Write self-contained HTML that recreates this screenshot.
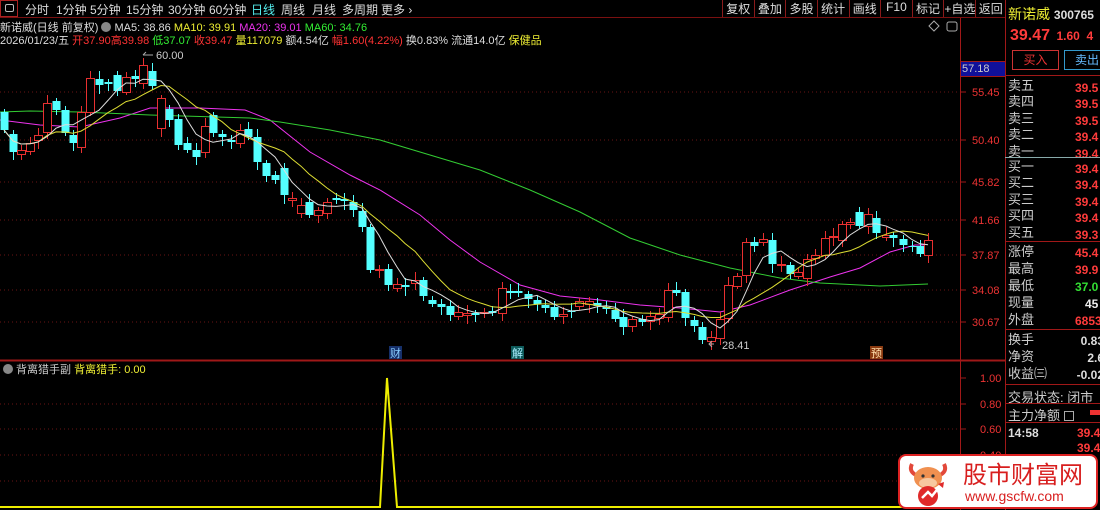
<!DOCTYPE html>
<html><head><meta charset="utf-8">
<style>
*{margin:0;padding:0;box-sizing:border-box}
body{width:1100px;height:510px;background:#000;overflow:hidden;position:relative;font-family:"Liberation Sans","Noto Sans CJK SC",sans-serif;color:#ccc}
.a{position:absolute;white-space:nowrap}
.top{font-size:12px;color:#ddd}
.rp{font-size:13px;color:#ccc}
.pr{color:#ff3b3b;font-size:12px;font-weight:bold}
</style></head><body>
<!-- top bar -->
<div class="a" style="left:0;top:0;width:18px;height:17px;border:1px solid #a22"></div>
<div class="a" style="left:5px;top:4px;width:9px;height:8px;border:1px solid #bbb;border-radius:2px"></div>
<div class="a top" style="left:25px;top:1px">分时</div>
<div class="a top" style="left:56px;top:1px">1分钟</div>
<div class="a top" style="left:90px;top:1px">5分钟</div>
<div class="a top" style="left:126px;top:1px">15分钟</div>
<div class="a top" style="left:168px;top:1px">30分钟</div>
<div class="a top" style="left:209px;top:1px">60分钟</div>
<div class="a top" style="left:251px;top:1px;color:#5ee">日线</div>
<div class="a top" style="left:281px;top:1px">周线</div>
<div class="a top" style="left:312px;top:1px">月线</div>
<div class="a top" style="left:342px;top:1px">多周期</div>
<div class="a top" style="left:381px;top:1px">更多 ›</div>
<div class="a" style="left:0;top:17px;width:1005px;height:1px;background:#7a1010"></div>
<div class="a top" style="left:722px;top:0;height:17px;width:283px;display:flex">
<span style="border-left:1px solid #8a1a1a;width:32px;text-align:center">复权</span><span style="border-left:1px solid #8a1a1a;width:32px;text-align:center">叠加</span><span style="border-left:1px solid #8a1a1a;width:32px;text-align:center">多股</span><span style="border-left:1px solid #8a1a1a;width:32px;text-align:center">统计</span><span style="border-left:1px solid #8a1a1a;width:32px;text-align:center">画线</span><span style="border-left:1px solid #8a1a1a;width:32px;text-align:center">F10</span><span style="border-left:1px solid #8a1a1a;width:32px;text-align:center">标记</span><span style="border-left:1px solid #8a1a1a;width:32px;text-align:center">+自选</span><span style="border-left:1px solid #8a1a1a;width:30px;text-align:center">返回</span>
</div>
<div class="a" style="left:0;top:19px;font-size:11px;color:#ddd">新诺威(日线 前复权) <span style="display:inline-block;width:10px;height:10px;border-radius:5px;background:#888;vertical-align:-1px"></span> MA5: 38.86 <span style="color:#ee3">MA10: 39.91</span> <span style="color:#e3e">MA20: 39.01</span> <span style="color:#3e3">MA60: 34.76</span></div>
<div class="a" style="left:0;top:32px;font-size:11px;color:#ddd">2026/01/23/五 <span style="color:#f33">开37.90</span><span style="color:#f33">高39.98</span> <span style="color:#3e3">低37.07</span> <span style="color:#f33">收39.47</span> <span style="color:#ee3">量117079</span> 额4.54亿 <span style="color:#f33">幅1.60(4.22%)</span> 换0.83% 流通14.0亿 <span style="color:#ee3">保健品</span></div>

<svg class="a" style="left:0;top:0" width="1005" height="510" id="ch">
<g stroke="#6a1414" stroke-dasharray="1,3" stroke-width="1">
<line x1="0" x2="960" y1="92" y2="92"/><line x1="0" x2="960" y1="140" y2="140"/><line x1="0" x2="960" y1="182" y2="182"/><line x1="0" x2="960" y1="220" y2="220"/><line x1="0" x2="960" y1="255" y2="255"/><line x1="0" x2="960" y1="290" y2="290"/><line x1="0" x2="960" y1="322" y2="322"/>
<line x1="0" x2="960" y1="404" y2="404"/><line x1="0" x2="960" y1="429" y2="429"/><line x1="0" x2="960" y1="455" y2="455"/><line x1="0" x2="960" y1="481" y2="481"/>
</g>
<line x1="960.5" x2="960.5" y1="18" y2="510" stroke="#a01818"/>
<line x1="0" x2="1005" y1="360.5" y2="360.5" stroke="#a01818" stroke-width="2"/>
<g stroke="#a01818"><line x1="960" x2="966" y1="92" y2="92"/><line x1="960" x2="966" y1="140" y2="140"/><line x1="960" x2="966" y1="182" y2="182"/><line x1="960" x2="966" y1="220" y2="220"/><line x1="960" x2="966" y1="255" y2="255"/><line x1="960" x2="966" y1="290" y2="290"/><line x1="960" x2="966" y1="322" y2="322"/><line x1="960" x2="966" y1="378" y2="378"/><line x1="960" x2="966" y1="404" y2="404"/><line x1="960" x2="966" y1="429" y2="429"/><line x1="960" x2="966" y1="455" y2="455"/></g>
<polyline fill="none" stroke="#e3e" stroke-width="1" points="0,120 40,125 80,127 120,118 150,108 200,108 245,110 270,120 310,152 350,175 380,190 420,215 450,240 480,262 520,285 560,296 600,300 640,305 680,308 720,312 750,305 790,290 830,277 860,268 890,252 915,245 928,245"/>
<polyline fill="none" stroke="#3c3" stroke-width="1" points="0,112 30,111 80,112 150,115 250,118 280,122 330,130 380,140 430,155 480,170 530,190 580,212 630,238 680,255 730,268 780,278 820,283 880,286 928,284"/>
<g id="cd"></g>
<polyline id="m10" fill="none" stroke="#dd3" stroke-width="1"/>
<polyline id="m5" fill="none" stroke="#ddd" stroke-width="1"/>
<polyline fill="none" stroke="#ee0" stroke-width="2" points="0,507 380,507 387,378 397,507 960,507"/>
<path d="M146 52 l-3 3 M143 55 h10" stroke="#aaa" fill="none"/>
<text x="156" y="59" fill="#ccc" font-size="11" font-family="Liberation Sans">60.00</text>
<path d="M714 344 h-5 m3 -3 l-3 3 l3 3" stroke="#aaa" fill="none"/>
<text x="722" y="349" fill="#ccc" font-size="11" font-family="Liberation Sans">28.41</text>
<g font-size="11" font-family="Liberation Sans" fill="#e33">
<text x="972" y="96">55.45</text><text x="972" y="144">50.40</text><text x="972" y="186">45.82</text><text x="972" y="224">41.66</text><text x="972" y="259">37.87</text><text x="972" y="294">34.08</text><text x="972" y="326">30.67</text>
<text x="980" y="382">1.00</text><text x="980" y="408">0.80</text><text x="980" y="433">0.60</text><text x="980" y="459">0.40</text>
</g>
<rect x="961" y="61" width="44" height="15" fill="#10109a"/>
<text x="962" y="72" fill="#ccc" font-size="11" font-family="Liberation Sans">57.18</text>
<line x1="961" x2="1005" y1="61.5" y2="61.5" stroke="#a01818"/><line x1="961" x2="1005" y1="76.5" y2="76.5" stroke="#a01818"/>
<rect x="389" y="346" width="13" height="13" fill="#16306a"/><text x="390" y="357" fill="#8cf" font-size="11" font-family="Noto Sans CJK SC">财</text>
<rect x="511" y="346" width="13" height="13" fill="#0d5a5a"/><text x="512" y="357" fill="#aef" font-size="11" font-family="Noto Sans CJK SC">解</text>
<rect x="870" y="346" width="13" height="13" fill="#8a3a10"/><text x="871" y="357" fill="#fda" font-size="11" font-family="Noto Sans CJK SC">预</text>
<path d="M929 26 l5 -5 l5 5 l-5 5 z" stroke="#aaa" fill="none"/>
<rect x="947" y="22" width="10" height="9" rx="2" stroke="#aaa" fill="none"/>
</svg>
<div class="a" style="left:3px;top:361px;font-size:11px;color:#ccc"><span style="display:inline-block;width:10px;height:10px;border-radius:5px;background:#888;vertical-align:-1px"></span> 背离猎手副 <span style="color:#ee3">背离猎手: 0.00</span></div>

<!-- right panel -->
<div class="a" style="left:1005px;top:0;width:1px;height:510px;background:#a01818"></div>
<div class="a" style="left:1008px;top:4px;font-size:14px;color:#ee3">新诺威 <span style="color:#ddd;font-size:12px;font-weight:bold">300765</span></div>
<div class="a" style="left:1010px;top:27px;font-size:16px;font-weight:bold;color:#ff3b3b">39.47 <span style="font-size:12px;margin-left:2px">1.60 &nbsp;4</span></div>
<div class="a" style="left:1012px;top:50px;width:47px;height:20px;border:1px solid #c33;color:#e33;font-size:12px;text-align:center;line-height:18px">买入</div>
<div class="a" style="left:1064px;top:50px;width:40px;height:20px;border:1px solid #39c;color:#6bf;font-size:12px;text-align:left;padding-left:10px;line-height:18px">卖出</div>
<div class="a" style="left:1005px;top:75px;width:95px;height:1px;background:#a01818"></div>
<div class="a rp" style="left:1008px;top:78px;line-height:16.4px">卖五<br>卖四<br>卖三<br>卖二<br>卖一</div>
<div class="a pr" style="left:1075px;top:80px;line-height:16.4px">39.5<br>39.5<br>39.5<br>39.4<br>39.4</div>
<div class="a" style="left:1005px;top:157px;width:95px;height:1px;background:#8aa"></div>
<div class="a rp" style="left:1008px;top:159px;line-height:16.4px">买一<br>买二<br>买三<br>买四<br>买五</div>
<div class="a pr" style="left:1075px;top:161px;line-height:16.4px">39.4<br>39.4<br>39.4<br>39.4<br>39.3</div>
<div class="a" style="left:1005px;top:241px;width:95px;height:1px;background:#a01818"></div>
<div class="a rp" style="left:1008px;top:243px;line-height:17px">涨停<br>最高<br>最低<br>现量<br>外盘</div>
<div class="a pr" style="left:1075px;top:245px;line-height:17px">45.4<br>39.9<br><span style="color:#3d3">37.0</span><br><span style="color:#eee;padding-left:10px">45</span><br>6853</div>
<div class="a" style="left:1005px;top:329px;width:95px;height:1px;background:#a01818"></div>
<div class="a rp" style="left:1008px;top:331px;line-height:17px">换手<br>净资<br>收益㈢</div>
<div class="a" style="left:1070px;top:333px;line-height:17px;font-size:12px;font-weight:bold;color:#ddd;text-align:right;width:34px">0.83<br>2.6<br>-0.02</div>
<div class="a" style="left:1005px;top:384px;width:95px;height:1px;background:#a01818"></div>
<div class="a rp" style="left:1008px;top:387px">交易状态: 闭市</div>
<div class="a" style="left:1005px;top:403px;width:95px;height:1px;background:#a01818"></div>
<div class="a rp" style="left:1008px;top:405px">主力净额 <span style="display:inline-block;width:10px;height:10px;border:1px solid #aaa;vertical-align:-1px"></span></div>
<div class="a" style="left:1090px;top:410px;width:10px;height:5px;background:#e33"></div>
<div class="a" style="left:1005px;top:422px;width:95px;height:1px;background:#a01818"></div>
<div class="a" style="left:1008px;top:426px;font-size:12px;font-weight:bold;color:#ddd">14:58</div>
<div class="a pr" style="left:1077px;top:426px;line-height:15px">39.4<br>39.4</div>

<!-- watermark -->
<div class="a" style="left:898px;top:454px;width:200px;height:55px;background:#fff;border:2px solid #d22;border-radius:8px"></div>
<svg class="a" style="left:904px;top:458px" width="50" height="50">
<path d="M8 6 q-4 8 6 12 M40 6 q4 8 -6 12" stroke="#e2483a" stroke-width="4" fill="none"/>
<ellipse cx="24" cy="20" rx="14" ry="11" fill="#f09050"/>
<ellipse cx="24" cy="25" rx="9" ry="5" fill="#f7c8a0"/>
<circle cx="19" cy="18" r="1.6" fill="#333"/><circle cx="29" cy="18" r="1.6" fill="#333"/>
<circle cx="24" cy="38" r="10" fill="#e02a2a"/>
<path d="M18 40 l6 -6 l4 4 l8 -10" stroke="#fff" stroke-width="2.5" fill="none"/>
<path d="M34 26 l6 -2 l-1 6 z" fill="#e02a2a"/>
</svg>
<div class="a" style="left:963px;top:459px;font-size:24px;color:#d81e1e;font-family:'Noto Sans CJK SC',sans-serif;line-height:28px">股市财富网</div>
<div class="a" style="left:965px;top:488px;font-size:14px;color:#d81e1e;line-height:16px">www.gscfw.com</div>

<script>
var c=[[4,112,130,0],[13,134,152,0],[21,150,154,1],[30,143,151,1],[38,135,140,1],[47,103,132,1],[56,101,110,0],[65,110,133,0],[73,135,143,0],[81,112,147,1],[90,78,112,1],[99,79,85,0],[108,82,84,0],[117,75,91,0],[126,77,92,1],[135,76,79,0],[143,65,83,1],[152,71,86,0],[161,98,128,1],[169,109,120,0],[178,119,145,0],[187,143,150,0],[196,150,157,0],[205,126,152,1],[213,115,133,0],[222,134,137,0],[231,140,142,0],[240,130,143,1],[248,129,137,0],[257,137,162,0],[266,163,176,0],[275,175,180,0],[284,168,195,0],[292,198,200,1],[301,205,213,1],[309,202,215,0],[318,210,215,1],[327,202,213,1],[336,198,200,0],[344,199,201,0],[353,202,210,0],[362,211,227,0],[370,227,270,0],[379,269,270,1],[388,269,285,0],[397,284,288,1],[405,285,287,0],[415,280,283,1],[423,280,296,0],[432,300,304,0],[441,304,307,0],[450,306,315,0],[458,312,316,1],[467,313,315,1],[475,313,315,0],[484,312,313,1],[492,311,313,0],[502,288,313,1],[510,291,293,0],[518,291,293,0],[528,294,299,0],[537,300,304,0],[545,305,308,0],[554,307,317,0],[563,314,316,1],[571,311,312,0],[579,301,306,1],[589,301,304,1],[597,303,306,0],[606,307,309,0],[615,310,319,0],[623,317,327,0],[632,319,326,1],[642,319,322,0],[650,316,321,1],[659,314,318,1],[668,290,317,1],[676,290,293,0],[685,292,318,0],[694,320,326,0],[702,327,340,0],[711,337,341,1],[720,319,338,1],[728,285,318,1],[737,276,286,1],[746,242,275,1],[754,242,246,0],[763,239,242,1],[772,240,264,0],[781,264,265,1],[790,265,274,0],[798,272,276,1],[807,259,278,1],[815,255,258,1],[825,238,255,1],[833,236,237,1],[842,224,240,1],[850,222,224,1],[859,212,226,0],[868,214,226,1],[876,218,233,0],[886,235,237,1],[893,235,238,0],[903,239,245,0],[912,246,247,0],[920,246,254,0],[928,240,255,1]];
var g=document.getElementById('cd'),h='',cl=[];
c.forEach(function(k,i){var x=k[0],t=k[1],b=k[2],up=k[3];var col=up?'#e83030':'#54ffff';
var hi=t-3-(i*7%6),lo=b+3+(i*5%7);
h+='<line x1="'+(x+.5)+'" x2="'+(x+.5)+'" y1="'+hi+'" y2="'+lo+'" stroke="'+col+'"/>';
var bh=Math.max(1,b-t);
if(up)h+='<rect x="'+(x-3.5)+'" y="'+(t+.5)+'" width="8" height="'+bh+'" fill="#000" stroke="'+col+'"/>';
else h+='<rect x="'+(x-3.5)+'" y="'+t+'" width="8" height="'+bh+'" fill="'+col+'"/>';
cl.push(up?t:b);});
g.innerHTML=h;
function ma(n){var p=[];for(var i=0;i<c.length;i++){var s=0,m=0;for(var j=Math.max(0,i-n+1);j<=i;j++){s+=cl[j];m++;}p.push(c[i][0]+','+(s/m).toFixed(1));}return p.join(' ');}
document.getElementById('m5').setAttribute('points',ma(5));
document.getElementById('m10').setAttribute('points',ma(10));
</script>
</body></html>
